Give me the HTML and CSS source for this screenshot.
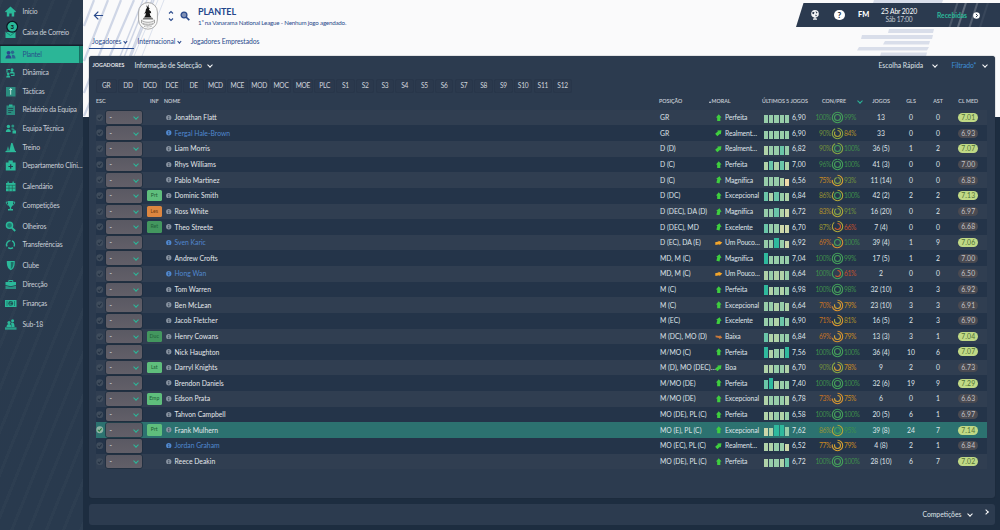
FILE: index.html
```html
<!DOCTYPE html>
<html lang="pt">
<head>
<meta charset="utf-8">
<title>Plantel</title>
<link rel="stylesheet" href="styles.css">
</head>
<body>
<svg class="backdrop" viewBox="0 0 1000 118">
  <g stroke="#cfd6e6" stroke-width="1.7" fill="none">
    <path d="M84 61L108 0M84 26L94 0M84 93L121 0M84 116L134 0" stroke-width="2.2"/>
    <path d="M95 118L143 0M106 118L154 0M118 72L147 0M128 60L152 0" stroke-width="1.5"/>
    <path d="M134 56L158 0M142 56L164 0" stroke-width=".7"/>
  </g>
  <g fill="#d9deea">
    <path d="M874 0h69l-1 3h-69zM889 29h45l-1 4h-45zM862 35h71l-1 4h-71zM885 41h45l-1 3.500h-46zM859 47h70l-2 3.500h-70zM881 52.500h46l-1 4h-46z"/>
  </g>
</svg>
<div class="app">
  <nav class="sidebar" id="sidebar"></nav>
  <main class="main">
    <header class="top">
      <div class="title-row">
        <svg class="back" viewBox="0 0 12 12"><path d="M11 6H2M5.800 1.800L1.500 6l4.300 4.200" fill="none" stroke="#2a4a8c" stroke-width="1.300"/></svg>
        <svg class="crest" viewBox="0 0 20 28">
          <rect x=".6" y=".6" width="18.800" height="26.600" rx="9.400" fill="#fbfbfb" stroke="#777" stroke-width=".6"/>
          <path d="M8 2.500l1.300 2.500 1.200-2.700v3l1.200 1.200-.8 1.200 2 1.800.3 1.800-1.500-.4.500 2.600 1.500 2H6l1.500-2.200.4-2.300-1.700.9 1.300-2.400.5-2.600 1-.9z" fill="#151515"/>
          <path d="M5.500 15.800h9l1 1.600H4.500z" fill="#777"/>
          <path d="M3.500 18c2 3 11 3 13 0v3c-3 3-10 3-13 0z" fill="#eee" stroke="#777" stroke-width=".6"/>
          <path d="M5 21.200c3 1.500 7 1.500 10 0M6 24.200c3 1 5 1 8 0" fill="none" stroke="#999" stroke-width=".8" stroke-dasharray="1 .5"/>
        </svg>
        <svg class="updown" viewBox="0 0 6 12"><path d="M1 3.500l2-2 2 2M1 8.500l2 2 2-2" fill="none" stroke="#2a4a8c" stroke-width="1.100"/></svg>
        <svg class="lens" viewBox="0 0 10 10"><circle cx="4" cy="4" r="2.900" fill="#7f90b5" stroke="#2a4a8c" stroke-width="1.300"/><path d="M6 6l3.300 3.200" stroke="#2a4a8c" stroke-width="1.700"/></svg>
        <div class="titles">
          <h1>PLANTEL</h1>
          <p>1ª na Vanarama National League - Nenhum jogo agendado.</p>
        </div>
        <div class="status">
          <svg class="globe" viewBox="0 0 10 12"><circle cx="5" cy="4.800" r="3.800" fill="#f3f4f6"/><path d="M2.500 2.700l2 .5-.6 2-1.600-.5zM5.500 2.200l2 1-1 1.600zM5 5.700l2 .3-1 1.500z" fill="#2b3a4f"/><path d="M3 10.200h4M5 8v2.200" stroke="#f3f4f6" stroke-width="1.300"/></svg>
          <span class="help">?</span>
          <b class="fm">FM</b>
          <div class="date"><span>25 Abr 2020</span><small>Sáb 17:00</small></div>
          <div class="inbox">Recebidas</div>
          <svg class="go" viewBox="0 0 7 7"><circle cx="3.500" cy="3.500" r="3.300" fill="#fff"/><path d="M2.900 1.900l1.700 1.600-1.700 1.600" fill="none" stroke="#26364a" stroke-width="1"/></svg>
        </div>
      </div>
      <div class="tabs">
        <span class="tab on">Jogadores <i class="chev"></i></span>
        <span class="tab">Internacional <i class="chev"></i></span>
        <span class="tab">Jogadores Emprestados</span>
      </div>
    </header>
    <section class="panel">
      <div class="panel-head">
        <b>JOGADORES</b><span class="view">Informação de Selecção</span><i class="chev big"></i>
        <span class="quick">Escolha Rápida</span><i class="chev big"></i>
        <span class="filter">Filtrado*</span><i class="chev big"></i>
      </div>
      <div class="slots" id="slots"></div>
      <div class="row head">
        <span>ESC</span><span></span><span class="inf">INF</span><span class="h-name">NOME</span><span class="h-pos">POSIÇÃO</span><span class="h-moral">MORAL</span><span class="h-last">ÚLTIMOS 5 JOGOS</span><span class="h-con">CON/PRE</span><span class="h-sort"><i class="chev big teal"></i></span><span class="c">JOGOS</span><span class="c">GLS</span><span class="c">AST</span><span class="c">CL MED</span>
      </div>
      <div id="rows"></div>
    </section>
    <footer class="foot"><span>Competições</span><i class="chev big"></i><i class="chev big side"></i></footer>
  </main>
</div>
<script src="app.js"></script>
</body>
</html>
```
FILE: styles.css
```css
* { box-sizing: border-box; }
body {
  margin: 0; width: 1000px; height: 530px; overflow: hidden; position: relative;
  background: linear-gradient(#fafafb 0 117.5px, #1d2d40 117.5px);
  font-family: Lato, "Open Sans", sans-serif; font-size: 6.8px; line-height: 1; color: #dfe3e8;
}
svg { display: block; flex: none; }
.backdrop { position: absolute; left: 0; top: 0; width: 1000px; height: 118px; }
.app { position: relative; display: flex; height: 530px; }

.sidebar {
  width: 83px; flex: none; display: flex; flex-direction: column; gap: 2.2px; padding-top: 1.2px;
  background: repeating-linear-gradient(112deg, #ffffff05 0 3px, transparent 3px 16px), linear-gradient(#2a3a4d, #293a4e);
}
.item { height: 18.7px; display: flex; align-items: center; padding-left: 5px; font-size: 6.8px; letter-spacing: -.18px; color: #c9cfd7; white-space: nowrap; }
.item svg { width: 11px; height: 11px; margin-right: 6.5px; color: #2bb99a; overflow: visible; }
.group:first-child .item { height: 21px; }
.item.on { height: 17px; margin: .6px 0 0; background: linear-gradient(90deg, #2bb697 0 78px, #176f62 78px 79px, #197e6e 79px); color: #27508a; border-left: 1px solid #1d7f70; padding-left: 4px; box-shadow: 0 -1.5px 0 #15202e; }
.item.on svg { color: #2b478c; }

.main { flex: 1; display: flex; flex-direction: column; padding: 0 5.5px 5.5px 6px; min-width: 0; }
.top { height: 55.5px; flex: none; margin-right: -5.5px; color: #2a4a8c; display: flex; flex-direction: column; }
.title-row { display: flex; height: 34px; align-items: flex-start; }
.back { width: 11px; height: 11px; margin: 10px 0 0 4px; }
.crest { width: 20px; height: 28px; margin: 1.5px 0 0 33.5px; }
.updown { width: 6px; height: 12px; margin: 10px 0 0 10.5px; }
.lens { width: 10px; height: 10px; margin: 10.5px 0 0 6px; }
.titles { margin: 7px 0 0 8px; }
h1 { margin: 0; font-size: 9px; line-height: 10px; font-weight: 700; letter-spacing: -.1px; color: #23468b; }
.titles p { margin: 2.5px 0 0; font-size: 6.2px; letter-spacing: -.2px; }
.status {
  margin: 3px 0 0 auto; width: 204px; height: 24px; flex: none; display: flex; align-items: center; color: #fff; padding-left: 14px;
  clip-path: polygon(7.5px 0, 100% 0, 100% 100%, 0 100%);
  background: linear-gradient(108deg, transparent 152px, #ffffff26 153px 154px, transparent 155px 160px, #ffffff40 161px 162px, transparent 163px 171px, #ffffff30 172px 173px, transparent 174px 181px, #ffffff10 182px 183px, transparent 184px), #2b3a4f;
}
.globe { width: 10px; height: 12px; }
.help { margin-left: 14px; width: 10.5px; height: 10.5px; border-radius: 50%; background: #fff; color: #26364a; font: 900 8px/10.5px Lato, sans-serif; text-align: center; }
.fm { margin-left: 13.5px; width: 12px; font: 900 7.4px/8px Lato, sans-serif; }
.date { margin-left: 8px; width: 42px; text-align: center; font-size: 6.8px; letter-spacing: -.15px; }
.date small { display: block; margin-top: 1.5px; font-size: 6.6px; letter-spacing: -.25px; color: #c2c8d0; }
.inbox { margin-left: 17px; width: 31px; font-size: 6.7px; color: #2bb99a; font-weight: 700; white-space: nowrap; }
.go { margin-left: 5px; width: 7px; height: 7px; }
.tabs { display: flex; height: 15px; font-size: 6.8px; letter-spacing: -.08px; }
.tab { padding: 4px 3px 0; margin-right: 3px; white-space: nowrap; }
.tab.on { width: 44.5px; margin-right: 1px; border-bottom: 1.5px solid #24488f; }
.chev { display: inline-block; flex: none; width: 2.8px; height: 2.8px; border: solid currentColor; border-width: 0 .9px .9px 0; transform: rotate(45deg); margin: 0 1px 1.5px 1px; }
.chev.big { width: 4px; height: 4px; border-width: 0 1.2px 1.2px 0; color: #fff; margin: 0 0 1px; }
.chev.teal { color: #2bb99a; }
.chev.side { transform: rotate(-45deg); }

.panel { height: 442.5px; flex: none; background: #2c3b4f; border-radius: 3px; padding: 0 7.5px 0 7px; overflow: hidden; box-shadow: 0 0 1px #16222f; }
.panel-head { height: 23.6px; padding-top: 5.8px; display: flex; align-items: flex-start; margin: 0 0 0 -3.5px; }
.panel-head > * { line-height: 8px; white-space: nowrap; }
.panel-head b { width: 42px; font-size: 5.3px; letter-spacing: .02px; color: #e2e5ea; }
.panel-head .view { width: 73.5px; letter-spacing: -.16px; }
.panel-head .chev.big { margin-top: 1.5px; }
.quick { margin-left: auto; width: 54.5px; }
.filter { width: 31px; margin-left: 14.5px; color: #3f8fd6; letter-spacing: -.1px; }
.panel-head .chev.big:last-child { margin-right: .5px; }
.slots { display: flex; height: 13.5px; }
.slot { width: 20.55px; margin-right: 1.3px; border: 1px solid #28364a; border-radius: 2px; background: #2b394d; text-align: center; line-height: 11.5px; font-size: 6.6px; color: #d3d8df; letter-spacing: -.25px; }
.slot.sub { width: 18.45px; }

.row { display: grid; grid-template-columns: 9.5px 41.5px 19px 494px 55px 49px 28px 20px 19px 13px 22px 30px 30px 24px 36.5px; height: 15.64px; align-items: center; white-space: nowrap; }
.row:nth-child(odd) { background: #303e51; }
.row:nth-child(even) { background: #243449; }
.row.sel { background: #2c7270; }
.row.head { background: none; height: 17.2px; padding-top: .8px; font-size: 5.3px; letter-spacing: .05px; color: #c6ccd4; -webkit-text-stroke: .12px; }
.inf { padding-left: 3px; }
.h-name { margin-left: -2px; }
.h-pos { margin-left: -1px; }
.h-moral { margin-left: -6px; display: flex; align-items: center; gap: .5px; }
.h-moral::before { content: ""; border: 1.7px solid transparent; border-top: 0; border-bottom: 2px solid #d5dae0; }
.h-last { grid-column: span 2; margin-left: -2px; letter-spacing: 0; }
.h-con { grid-column: span 2; margin-left: 10px; }
.h-sort { margin-left: 14px; display: flex; }
.c { text-align: center; }

.tick { width: 7.5px; height: 7.5px; margin-left: .3px; }
.pick { width: 36.5px; height: 13.6px; border-radius: 2px; background: linear-gradient(#5a5963, #625f68); box-shadow: 0 0 0 .7px #1e2c3c; display: flex; justify-content: space-between; align-items: center; padding: 0 4.2px 0 4px; }
.tag { display: block; width: 14.5px; height: 11.5px; border-radius: 1.5px; font-size: 5.2px; line-height: 11.5px; text-align: center; color: #1c5a34; background: #5fbe7c; }
.tag.les { background: #dc8640; color: #6d3a10; }
.tag.dim { background: #43975f; color: #22603a; }
.name { display: flex; align-items: center; gap: 3px; color: #e3e6ea; }
.name svg { width: 5.5px; height: 5.5px; color: #8792a0; }
.name.link, .name.link svg { color: #5088cf; }
.moral { display: flex; align-items: center; gap: 2.5px; letter-spacing: -.12px; }
.moral svg { width: 7.5px; height: 7.5px; }
.bars { display: flex; align-items: flex-end; gap: .9px; height: 12.5px; padding-bottom: .5px; }
.bars i { width: 4.3px; }
.n { height: 6.5px; background: #efd9a9; }
.y { height: 7.8px; background: #ccd7aa; }
.a { height: 8.2px; background: #b0d2a8; }
.b { height: 8.4px; background: #97cda9; }
.d { height: 9px; background: #6ac5a8; }
.e { height: 10.5px; background: #2fb99d; }
.rate { letter-spacing: .1px; }
.pct { font-size: 6.7px; letter-spacing: -.38px; }
.con { text-align: right; }
.med { justify-self: center; width: 20px; height: 9px; border-radius: 4.5px; background: #4a4a51; color: #c2c2c6; line-height: 9.5px; text-align: center; font-size: 6.8px; letter-spacing: .12px; }
.med.hi { background: #c0d985; color: #4f7038; }

.foot { height: 20.5px; margin-top: 6px; flex: none; background: #2c3b4f; border-radius: 3px; display: flex; align-items: center; justify-content: flex-end; padding-right: 6.5px; }
.foot span { margin-right: 6.5px; }
.foot .side { margin-left: 12px; margin-bottom: 4px; }
```
FILE: app.js
```
const ICONS = {
  home: '<path d="M0 5.500L5.500.5 11 5.500l-1 1-.8-.7V10.500H6.700V7.500H4.300v3H1.800V5.800L1 6.500z"/>',
  mail: '<path d="M.5 5h10v6H.5z"/><path d="M.8 5l4.700 3.500L10.200 5" fill="none" stroke="#1c7f70"/><circle cx="7.200" cy="-.2" r="5.400" fill="#2bb99a" stroke="#0b1420" stroke-width="1.200"/><text x="5.500" y="2" font-size="6" font-weight="900" fill="#0b1420">3</text>',
  team: '<circle cx="3.500" cy="3.800" r="1.900"/><path d="M.5 9.500c0-2.500 1.500-3.500 3-3.500s3 1 3 3.500z"/><circle cx="7.500" cy="3.300" r="1.700" opacity=".7"/><path d="M6.800 6c2-.8 3.700.6 3.700 3.500H7.300z" opacity=".7"/>',
  dyn: '<path d="M2 5.500V2.500h3M9 5.500v3H6" fill="none" stroke="currentColor" stroke-width="1.100"/><circle cx="7" cy="2.800" r="1.500"/><path d="M5 6.500c0-3 4-3 4 0z"/><circle cx="3.200" cy="6.800" r="1.400"/><path d="M1.200 10.500c0-3 4-3 4 0z"/>',
  board: '<path d="M1 1h9.500v9.500H1z" opacity=".65"/><path d="M5.700 2.500v6.200M4.500 4l1.200-1.300L7 4" fill="none" stroke="#d2efe8" stroke-width=".9"/>',
  clip: '<path d="M1.500 1.500H10v9.500H1.500z" opacity=".65"/><path d="M4 .5h3.500v2H4z"/><path d="M3.200 4.500h5M3.200 6.500h5M3.200 8.500h3" stroke="#22404d" stroke-width=".8"/>',
  staff: '<circle cx="3.400" cy="3.500" r="1.700"/><path d="M.8 9c0-4 5-4 5 0z"/><circle cx="7.800" cy="3" r="1.500" opacity=".7"/><path d="M5.800 6c2-1.500 4-.5 4 2z" opacity=".7"/><path d="M7.500 7.500h3.500v3H7.500z"/>',
  train: '<path d="M4 10L6.200 1l1.300 0L10.500 10z"/><path d="M1 10l2-6 2 6z" opacity=".7"/><path d="M.5 9h10.500v1.200H.5z"/>',
  med: '<path d="M.8 2.500h9.800v8H.8zM3.500.6h4.300v2H3.500z"/><path d="M5.700 4.200v4.600M3.400 6.500H8" stroke="#263a4c" stroke-width="1.200"/>',
  cal: '<path d="M1 2h9.500v8.300H1zM2.500.6h1.300v2H2.500zM7.500.6h1.300v2H7.500z"/><path d="M1 4.300h9.500M1 7.200h9.500M4 4.300v6M7.300 4.300v6" stroke="#23594f" stroke-width=".6"/>',
  cup: '<path d="M3 1h5v4L6.200 7.300V9H8v1.500H3V9h1.800V7.300L3 5z"/><path d="M3 2H1.300c0 2 1 3 2 3M8 2h1.700c0 2-1 3-2 3" fill="none" stroke="currentColor" stroke-width=".9"/>',
  scout: '<circle cx="4.500" cy="4.300" r="3.100" fill="#1e7d72" stroke="currentColor" stroke-width="1.400"/><path d="M6.800 6.600L10.200 10" stroke="currentColor" stroke-width="1.900"/>',
  trans: '<path d="M2 7.500A4 4 0 0 1 5.500 1.600M7 1.900A4 4 0 0 1 9 7.500M8 8.600a4 4 0 0 1-4.800 0" fill="none" stroke="currentColor" stroke-width="1.400"/>',
  shield: '<path d="M1.800 1h8c0 5-.8 7.500-4 9.300C2.600 8.500 1.800 6 1.800 1z"/><path d="M5.800 2v7c1.800-1.300 2.700-3 2.800-7z" fill="#1d6f67"/>',
  case: '<path d="M.5 3h10.500v3L5.700 7.300.5 6z"/><path d="M.5 6.800l5.200 1.300L11 6.800V10H.5z" opacity=".7"/><path d="M3.800 3V1.500h4V3" fill="none" stroke="currentColor"/>',
  cash: '<path d="M0 2h11.500v7H0z"/><circle cx="5.700" cy="5.500" r="2.400" fill="#1d4e52"/><path d="M6.800 4.300c-1.500-.8-2 .3-1.700 2l-.4.700h2.200" fill="none" stroke="#2bb99a" stroke-width=".7"/><path d="M2 3v5M9.500 3v5" stroke="#1d6f67" stroke-width=".8"/>',
  youth: '<circle cx="4" cy="3.600" r="1.600"/><circle cx="7.600" cy="1.800" r="1.500"/><path d="M1.500 8c0-4 5-4 5 0zM6 4c2-1.200 3.600 0 3.600 4H6.800z"/><path d="M0 8.300h11.500v2.400H0z" opacity=".8"/>'
};
const MENU = [
  [['home', 'Início'], ['mail', 'Caixa de Correio']],
  [['team', 'Plantel', 1], ['dyn', 'Dinâmica'], ['board', 'Tácticas'], ['clip', 'Relatório da Equipa'], ['staff', 'Equipa Técnica'], ['train', 'Treino'], ['med', 'Departamento Clíni…']],
  [['cal', 'Calendário'], ['cup', 'Competições']],
  [['scout', 'Olheiros'], ['trans', 'Transferências']],
  [['shield', 'Clube'], ['case', 'Direcção'], ['cash', 'Finanças']],
  [['youth', 'Sub-18']]
];
document.getElementById('sidebar').innerHTML = MENU.map(g => '<div class="group">' + g.map(([i, t, on]) =>
  `<div class="item${on ? ' on' : ''}"><svg viewBox="0 0 11 11" fill="currentColor">${ICONS[i]}</svg>${t}</div>`).join('') + '</div>').join('');

document.getElementById('slots').innerHTML =
  'GR DD DCD DCE DE MCD MCE MOD MOC MOE PLC'.split(' ').map(s => `<span class="slot">${s}</span>`).join('') +
  Array.from({ length: 12 }, (_, i) => `<span class="slot sub">S${i + 1}</span>`).join('');

// name | position | arrow | morale | form bars | rating | condition | sharpness | games | goals | assists | average | tag
const PLAYERS = `Jonathan Flatt|GR|up|Perfeita|bbbbb|6,90|100|99|13|0|0|7.01
*Fergal Hale-Brown|GR|ne|Realment…|bbbbb|6,90|90|84|33|0|0|6.93
Liam Morris|D (D)|ne|Realment…|abbdb|6,82|90|100|36 (5)|1|2|7.07
Rhys Williams|D (C)|up|Perfeita|adada|7,00|96|100|41 (3)|0|0|7.00
Pablo Martinez|D (C)|nn|Magnífica|bbban|6,56|75|93|11 (14)|0|0|6.83
Dominic Smith|D (DC)|up|Excepcional|dadba|6,84|86|100|42 (2)|2|2|7.13|Prt
Ross White|D (DEC), DA (D)|nn|Magnífica|bbday|6,72|83|91|16 (20)|0|2|6.97|Les
Theo Streete|D (DEC), MD|nn|Excelente|dbbyy|6,70|87|66|7 (4)|0|0|6.68|Ret
*Sven Karic|D (EC), DA (E)|ea|Um Pouco…|bbeby|6,92|69|100|39 (4)|1|9|7.06
Andrew Crofts|MD, M (C)|nn|Magnífica|ebbbb|7,04|100|99|17 (5)|1|2|7.00
*Hong Wan|MD, M (C)|ea|Um Pouco…|abaab|6,64|100|61|2|0|0|6.50
Tom Warren|M (C)|up|Perfeita|eabab|6,98|100|98|32 (10)|3|3|6.92
Ben McLean|M (C)|up|Excepcional|bbaba|6,64|70|79|23 (10)|3|3|6.91
Jacob Fletcher|M (EC)|nn|Excelente|bbadb|6,90|71|81|16 (5)|2|3|6.90
Henry Cowans|M (DC), MO (D)|lo|Baixa|daabb|6,84|69|79|13 (3)|3|1|7.04|Duc
Nick Haughton|M/MO (C)|up|Perfeita|eabbe|7,56|100|100|36 (4)|10|6|7.07
Darryl Knights|M (D), MO (DEC)…|ne|Boa|aabba|6,70|90|78|9|2|0|6.73|Lst
Brendon Daniels|M/MO (DE)|up|Perfeita|deabb|7,40|100|100|32 (6)|19|9|7.29
Edson Prata|M/MO (DE)|up|Excepcional|abbba|6,78|73|75|6|0|1|6.63|Emp
Tahvon Campbell|MO (DE), PL (C)|up|Perfeita|aabab|6,58|100|100|20 (5)|6|1|6.97
Frank Mulhern|MO (E), PL (C)|up|Excepcional|yaeeb|7,62|86|95|39 (8)|24|7|7.14|Prt
*Jordan Graham|MO (EC), PL (C)|ne|Realment…|aabby|6,52|77|79|4 (8)|2|1|6.84
Reece Deakin|MO (DE), PL (C)|up|Perfeita|abbad|6,72|100|100|28 (10)|6|7|7.02`.split('\n').map(l => l.split('|'));

const UP = '<path d="M4 .2L7 3.600H5.700v4H2.300v-4H1z" fill="#3fce3f"/>';
const turn = (deg, fill) => UP.replace('/>', ` transform="rotate(${deg} 4 4)"/>`).replace('#3fce3f', fill);
const ARROWS = {
  up: UP, nn: turn(14, '#3fce3f'), ne: turn(48, '#3fce3f'),
  ea: '<path d="M.2 3.500l3.600-.8V1.800l4 2-3 2.900v-1L.4 6.400z" fill="#f2a52b"/>',
  lo: '<path d="M.5 2.600l4 .5 1-.6 2.300 2.600-3.200 1.200-.3-1.100-3.600-.7z" fill="#c9793a"/>'
};
const shade = v => v >= 95 ? '#45a05a' : v >= 90 ? '#86a544' : v >= 81 ? '#b0a63a' : v >= 74 ? '#d5a032' : v >= 68 ? '#d79230' : '#cf5a30';
const ink = v => v >= 95 ? '#3f8f4c' : v >= 90 ? '#70923c' : v >= 86 ? '#959234' : v >= 80 ? '#b0912a' : v >= 74 ? '#c98a22' : v >= 68 ? '#c67222' : '#c2512a';
const arc = (v, r) => {
  const c = 2 * Math.PI * r;
  return `<circle cx="6.500" cy="6.500" r="${r}" fill="none" stroke="${shade(v)}" stroke-width="1.100" stroke-dasharray="${c * v / 100} ${c}" transform="rotate(-90 6.500 6.500)"/>`;
};
document.getElementById('rows').innerHTML = PLAYERS.map(p => {
  const [rawName, pos, arrow, moral, bars, rate, con, pre, games, goals, assists, avg, tag] = p;
  const link = rawName[0] === '*', name = rawName.replace('*', ''), sel = name === 'Frank Mulhern';
  const cls = tag === 'Les' ? 'tag les' : tag === 'Ret' || tag === 'Duc' ? 'tag dim' : 'tag';
  return `<div class="row${sel ? ' sel' : ''}">
    <svg class="tick" viewBox="0 0 8 8"><circle cx="4" cy="4" r="3.700" fill="${sel ? '#8fb3a5' : '#3f4c5c'}"/><path d="M2 4l1.500 1.600L6 2.600" fill="none" stroke="${sel ? '#1e7a35' : '#233142'}" stroke-width="1.100"/></svg>
    <span class="pick">-<i class="chev big teal"></i></span>
    <span>${tag ? `<span class="${cls}">${tag}</span>` : ''}</span>
    <span class="name${link ? ' link' : ''}"><svg viewBox="0 0 6 6"><circle cx="3" cy="3" r="2.900" fill="currentColor"/><path d="M3 1.200v.9M3 2.700v2.100" stroke="#26364a" stroke-width=".9"/></svg>${name}</span>
    <span>${pos}</span>
    <span class="moral"><svg viewBox="0 0 8 8">${ARROWS[arrow]}</svg>${moral}</span>
    <span class="bars">${[...bars].map(b => `<i class="${b}"></i>`).join('')}</span>
    <span class="rate">${rate}</span>
    <span class="pct con" style="color:${ink(+con)}">${con}%</span>
    <svg width="13" height="13" viewBox="0 0 13 13">${arc(+con, 5.200)}${arc(+pre, 3)}</svg>
    <span class="pct" style="color:${ink(+pre)}">${pre}%</span>
    <span class="c">${games}</span><span class="c">${goals}</span><span class="c">${assists}</span>
    <span class="med${+avg > 7 ? ' hi' : ''}">${avg}</span>
  </div>`;
}).join('');
```
